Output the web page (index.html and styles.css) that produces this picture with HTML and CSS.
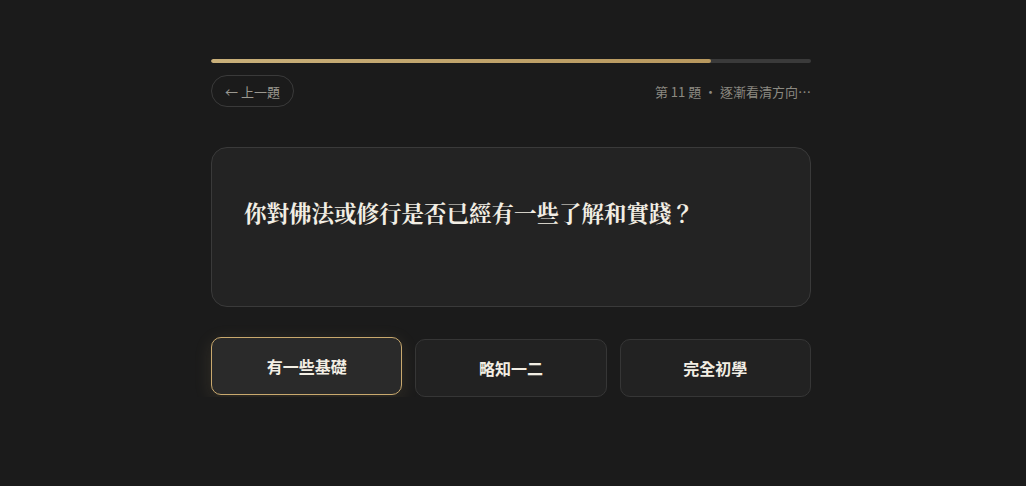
FILE: index.html
```html
<!DOCTYPE html>
<html lang="zh-Hant">
<head>
<meta charset="utf-8">
<title>問答</title>
<link rel="stylesheet" href="styles.css">
</head>
<body>
<main class="quiz">
  <div class="progress"><div class="progress-fill" style="width: 83.3%"></div></div>
  <div class="nav">
    <button class="back">← 上一題</button>
    <span class="status">第 11 題 · 逐漸看清方向⋯</span>
  </div>
  <section class="question">
    <h1>你對佛法或修行是否已經有一些了解和實踐？</h1>
  </section>
  <div class="options">
    <button class="option selected">有一些基礎</button>
    <button class="option">略知一二</button>
    <button class="option">完全初學</button>
  </div>
</main>
</body>
</html>
```

FILE: styles.css
```css
html, body {
  margin: 0;
  padding: 0;
  background: #1b1b1b;
  font-family: "Noto Sans CJK TC", "Noto Sans", sans-serif;
  color: #efebe2;
}

body {
  padding-right: 4px;
}

.quiz {
  width: 600px;
  margin: 0 auto;
  padding-top: 59px;
}

.progress {
  height: 4px;
  border-radius: 2px;
  background: #3a3a3a;
  overflow: hidden;
}

.progress-fill {
  height: 100%;
  border-radius: 2px;
  background: linear-gradient(90deg, #c9b07a, #b8985e);
}

.nav {
  display: flex;
  justify-content: space-between;
  align-items: center;
  margin-top: 12px;
}

.back {
  height: 32px;
  padding: 0 13px;
  border: 1px solid #3a3a3a;
  border-radius: 16px;
  background: transparent;
  color: #9a9890;
  font-family: inherit;
  font-size: 13px;
  cursor: pointer;
}

.status {
  font-size: 13px;
  color: #8c8a82;
}

.question {
  margin-top: 40px;
  min-height: 160px;
  box-sizing: border-box;
  padding: 48px 32px;
  background: #232323;
  border: 1px solid #3a3a3a;
  border-radius: 16px;
}

.question h1 {
  margin: 0;
  font-family: "Noto Serif CJK TC", "AR PL UMing TW", serif;
  font-size: 22.5px;
  font-weight: 700;
  line-height: 32px;
  color: #f2eee4;
}

.options {
  display: grid;
  grid-template-columns: repeat(3, 1fr);
  gap: 13px;
  margin-top: 32px;
}

.option {
  height: 58px;
  border: 1px solid #363636;
  border-radius: 10px;
  background: #222222;
  color: #f2eee4;
  font-family: inherit;
  font-size: 16px;
  font-weight: 700;
  cursor: pointer;
}

.option.selected {
  transform: translateY(-2px);
  background: #2a2a2a;
  border-color: #c9a96e;
  box-shadow: 0 4px 18px rgba(201, 169, 110, 0.14);
}
```
